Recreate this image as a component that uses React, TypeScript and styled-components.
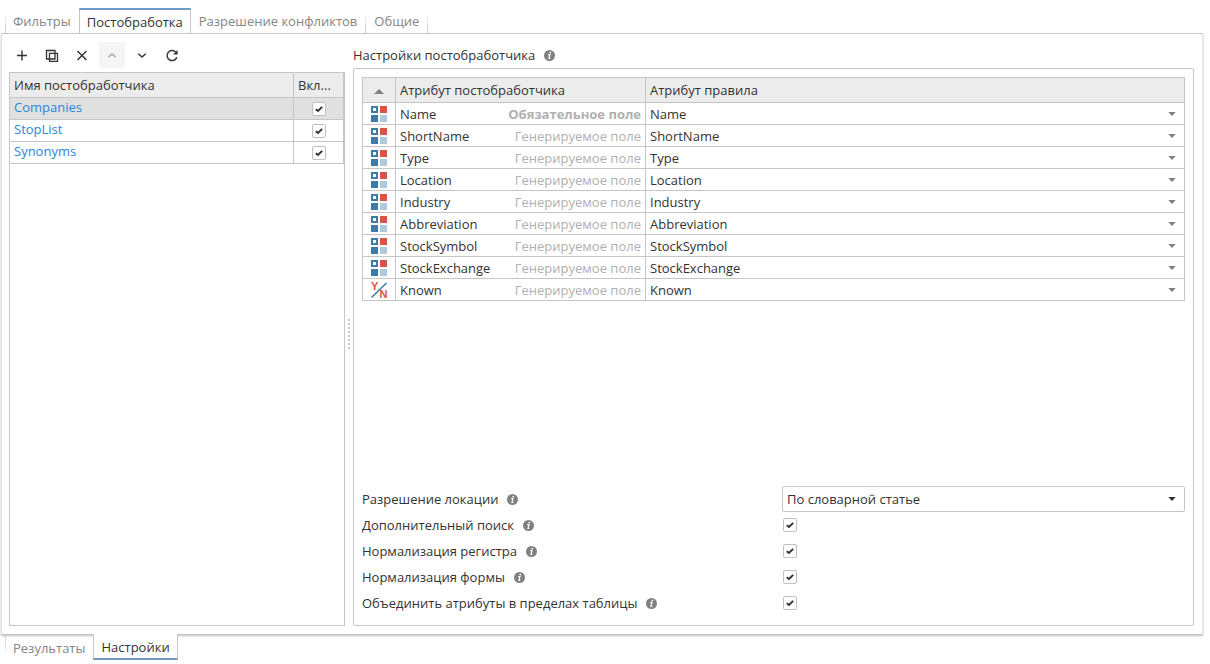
import React, { useState } from "react";
import styled, { createGlobalStyle, css } from "styled-components";

const line = "#c5c5c5";
const accent = "#6d9ac8";

const GlobalStyle = createGlobalStyle`
  *, *::before, *::after { box-sizing: border-box; }
  body {
    margin: 0;
    background: #fff;
    color: #333;
    font: 13px/20px "Open Sans", sans-serif;
  }
  button, input, select { font: inherit; color: inherit; }
`;

const Page = styled.div`
  display: flex;
  flex-direction: column;
  min-height: 100vh;
  padding: 8px 7px 4px 1px;
`;

const Tabs = styled.nav<{ $side: "top" | "bottom" }>`
  display: flex;
  position: relative;
  height: 26px;
  padding-left: 4px;
  ${(p) => (p.$side === "top" ? "margin-bottom: -1px;" : "margin-top: -1px;")}
`;

const Tab = styled.button<{ $side: "top" | "bottom"; $active?: boolean }>`
  padding: ${(p) => (p.$side === "top" ? "0 8px" : "1px 8px 0")};
  border: 0;
  background: none;
  color: #858585;
  white-space: nowrap;
  border-style: solid;
  border-width: 0 1px 0 0;
  border-image: linear-gradient(
      ${(p) => (p.$side === "top" ? "to bottom" : "to top")},
      transparent 20%,
      ${line}
    )
    1;
  &:first-child { border-left-width: 1px; padding-left: 7px; }
  ${(p) =>
    p.$active &&
    css`
      padding: ${p.$side === "top" ? "0 7px" : "2px 7px 0"};
      background: #fff;
      color: #333;
      border-image: none;
      border-color: ${line};
      border-width: 0 1px;
      ${p.$side === "top"
        ? `border-top: 2px solid ${accent};`
        : `border-bottom: 2px solid ${accent};`}
      margin-left: -1px;
    `}
`;

const Frame = styled.main`
  flex: 1;
  display: flex;
  padding: 8px;
  border-top: 1px solid ${line};
  border-bottom: 1px solid ${line};
  border-left: 1px solid #e4e4e4;
  border-right: 1px solid #e4e4e4;
  box-shadow: 0 1px 2px rgba(0, 0, 0, 0.25);
  clip-path: inset(0 -3px -3px -1px);
`;

const Side = styled.section`
  display: flex;
  flex-direction: column;
  flex: 0 0 336px;
  margin-left: -1px;
`;

const Toolbar = styled.div`
  display: flex;
  gap: 4px;
  margin-bottom: 4px;
`;

const ToolButton = styled.button`
  display: grid;
  place-items: center;
  width: 26px;
  height: 26px;
  padding: 0;
  border: 0;
  border-radius: 2px;
  background: none;
  color: #333;
  &:disabled { background: #f5f5f5; color: #a5a5a5; }
`;

const ListPanel = styled.div`
  flex: 1;
  border: 1px solid ${line};
`;

const Grid = styled.table`
  width: 100%;
  table-layout: fixed;
  border-collapse: separate;
  border-spacing: 0;
`;

const FieldGrid = styled(Grid)`
  border-top: 1px solid ${line};
  border-left: 1px solid ${line};
`;

const Head = styled.th`
  height: 25px;
  padding: 0 4px;
  border-right: 1px solid ${line};
  border-bottom: 1px solid ${line};
  background: #ececec;
  font-weight: 400;
  text-align: left;
  white-space: nowrap;
  svg { display: block; margin-top: 2px; }
`;

const Cell = styled.td<{ $center?: boolean }>`
  height: 22px;
  padding: ${(p) => (p.$center ? "0" : "0 4px")};
  border-right: 1px solid ${line};
  border-bottom: 1px solid ${line};
  line-height: 20px;
  text-align: ${(p) => (p.$center ? "center" : "left")};
`;

const Row = styled.tr<{ $selected?: boolean }>`
  background: ${(p) => (p.$selected ? "#e0e0e0" : "#fff")};
`;

const CellIcon = styled.span`
  display: flex;
  justify-content: center;
`;

const NameLink = styled.a`
  display: block;
  height: 21px;
  line-height: 18px;
  color: #2b86dc;
  text-decoration: none;
`;

const CheckBox = styled.span`
  display: grid;
  > * { grid-area: 1 / 1; place-self: center; }
  svg { pointer-events: none; visibility: hidden; }
  input:checked + svg { visibility: visible; }
`;

const CheckInput = styled.input`
  appearance: none;
  width: 14px;
  height: 14px;
  margin: 0;
  border: 1px solid #c0c0c0;
  border-radius: 2px;
  background: #fff;
`;

const Splitter = styled.div`
  display: grid;
  place-items: center;
  flex: 0 0 8px;
`;

const Grip = styled.span`
  width: 2px;
  height: 30px;
  background: repeating-linear-gradient(#c5c5c5 0 2px, transparent 2px 4px);
`;

const Detail = styled.section`
  display: flex;
  flex-direction: column;
  flex: 1;
  min-width: 0;
`;

const Title = styled.h2`
  display: flex;
  align-items: center;
  gap: 9px;
  height: 26px;
  margin: 0;
  font-size: 13px;
  font-weight: 400;
`;

const DetailPanel = styled.div`
  display: flex;
  flex-direction: column;
  justify-content: space-between;
  flex: 1;
  gap: 16px;
  padding: 8px;
  border: 1px solid ${line};
  border-radius: 2px;
`;

const AttributeName = styled.div`
  display: flex;
  justify-content: space-between;
`;

const Hint = styled.span<{ $required?: boolean }>`
  color: #b0b0b0;
  font-weight: ${(p) => (p.$required ? 700 : 400)};
`;

const SelectWrap = styled.div<{ $boxed?: boolean }>`
  position: relative;
  height: ${(p) => (p.$boxed ? 26 : 20)}px;
  border: ${(p) => (p.$boxed ? `1px solid ${line}` : "0")};
  border-radius: 2px;
  color: ${(p) => (p.$boxed ? "#333" : "#808080")};
  svg {
    position: absolute;
    top: 0;
    bottom: 0;
    right: ${(p) => (p.$boxed ? 8 : 4)}px;
    margin: auto 0;
    pointer-events: none;
  }
`;

const Select = styled.select<{ $boxed?: boolean }>`
  display: block;
  appearance: none;
  width: 100%;
  height: 100%;
  padding: 0 20px 0 ${(p) => (p.$boxed ? 4 : 0)}px;
  border: 0;
  background: none;
  color: #333;
`;

const Form = styled.form`
  display: grid;
  grid-template-columns: minmax(0, 420px) minmax(0, 1fr);
  grid-auto-rows: 26px;
  align-items: center;
  padding-bottom: 1px;
`;

const Label = styled.label`
  display: flex;
  align-items: center;
  gap: 9px;
  white-space: nowrap;
`;

const Value = styled.div`
  display: flex;
  padding-left: 1px;
`;

const Info = () => (
  <svg width="11" height="11" viewBox="0 0 11 11" aria-hidden="true">
    <circle cx="5.5" cy="5.5" r="5.5" fill="#808080" />
    <circle cx="6.3" cy="2.6" r="0.95" fill="#fff" />
    <path d="M4.2 4.7H5.9L5 8.3H6.3" fill="none" stroke="#fff" strokeWidth="1.2" />
  </svg>
);

const Caret = () => (
  <svg width="8" height="4" viewBox="0 0 8 4" aria-hidden="true">
    <path d="M0.3 0H7.7L4 4Z" fill="currentColor" />
  </svg>
);

const StringIcon = () => (
  <svg width="16" height="16" viewBox="0 0 16 16" aria-hidden="true">
    <rect width="7" height="7" fill="#3d7ba8" />
    <rect x="2" y="2" width="3" height="3" fill="#fff" />
    <rect x="9" width="7" height="7" fill="#d95448" />
    <rect y="9" width="7" height="7" fill="#3d7ba8" />
    <rect x="9" y="9" width="7" height="7" fill="#b0c9dc" />
  </svg>
);

const BooleanIcon = () => (
  <svg width="16" height="16" viewBox="0 0 16 16" overflow="visible" aria-hidden="true">
    <g fill="#d95448" fontFamily="Liberation Sans, sans-serif" fontWeight="700" fontSize="11">
      <text x="0" y="8">Y</text>
      <text x="8.5" y="16">N</text>
    </g>
    <path d="M0.5 15.5L15.5 1" stroke="#3d7ba8" strokeWidth="1.5" />
  </svg>
);

const glyph = { width: 16, height: 16, viewBox: "0 0 16 16", fill: "none", stroke: "currentColor" };

const AddIcon = () => (
  <svg {...glyph} strokeWidth="1.4"><path d="M8 3.5v10M3 8.5h10" /></svg>
);
const CopyIcon = () => (
  <svg {...glyph} strokeWidth="1.3">
    <path d="M2.5 3.5h8.5v8.5H2.5zM5.5 6.3h8v8h-8z" />
  </svg>
);
const DeleteIcon = () => (
  <svg {...glyph} strokeWidth="1.5"><path d="M3.5 4l9 9M12.5 4l-9 9" /></svg>
);
const UpIcon = () => (
  <svg {...glyph} strokeWidth="1.5"><path d="M4.3 10.3L8 7L11.7 10.3" /></svg>
);
const DownIcon = () => (
  <svg {...glyph} strokeWidth="1.5"><path d="M4.3 6.7L8 10L11.7 6.7" /></svg>
);
const RefreshIcon = () => (
  <svg {...glyph} strokeWidth="1.5">
    <path d="M12.8 10.2A5 5 0 1 1 11.6 5" />
    <path d="M13.6 3V7.6H9Z" fill="currentColor" stroke="none" />
  </svg>
);

function Check({ id, label }: { id?: string; label?: string }) {
  return (
    <CheckBox>
      <CheckInput id={id} type="checkbox" defaultChecked aria-label={label} />
      <svg width="8" height="8" viewBox="0 0 8 8" aria-hidden="true">
        <path d="M0.8 4.2L3 6L7.2 1.9" fill="none" stroke="#333" strokeWidth="2" />
      </svg>
    </CheckBox>
  );
}

const processors = ["Companies", "StopList", "Synonyms"];
const attributes = [
  "Name", "ShortName", "Type", "Location", "Industry",
  "Abbreviation", "StockSymbol", "StockExchange", "Known",
];
const options = [
  "Дополнительный поиск",
  "Нормализация регистра",
  "Нормализация формы",
  "Объединить атрибуты в пределах таблицы",
];
const tools = [
  { label: "Добавить", icon: <AddIcon /> },
  { label: "Копировать", icon: <CopyIcon /> },
  { label: "Удалить", icon: <DeleteIcon /> },
  { label: "Вверх", icon: <UpIcon />, disabled: true },
  { label: "Вниз", icon: <DownIcon /> },
  { label: "Обновить", icon: <RefreshIcon /> },
];

function TabBar({ side, items, initial }: { side: "top" | "bottom"; items: string[]; initial: number }) {
  const [active, setActive] = useState(initial);
  return (
    <Tabs $side={side}>
      {items.map((item, i) => (
        <Tab key={item} type="button" $side={side} $active={i === active} onClick={() => setActive(i)}>
          {item}
        </Tab>
      ))}
    </Tabs>
  );
}

export default function App() {
  const [selected, setSelected] = useState(0);
  return (
    <Page>
      <GlobalStyle />
      <TabBar side="top" initial={1} items={["Фильтры", "Постобработка", "Разрешение конфликтов", "Общие"]} />
      <Frame>
        <Side>
          <Toolbar>
            {tools.map((t) => (
              <ToolButton key={t.label} type="button" aria-label={t.label} disabled={t.disabled}>
                {t.icon}
              </ToolButton>
            ))}
          </Toolbar>
          <ListPanel>
            <Grid>
              <colgroup>
                <col />
                <col width="50" />
              </colgroup>
              <thead>
                <tr>
                  <Head>Имя постобработчика</Head>
                  <Head title="Включен">Вкл...</Head>
                </tr>
              </thead>
              <tbody>
                {processors.map((name, i) => (
                  <Row key={name} $selected={i === selected} onClick={() => setSelected(i)}>
                    <Cell><NameLink href="#">{name}</NameLink></Cell>
                    <Cell $center><Check label={name} /></Cell>
                  </Row>
                ))}
              </tbody>
            </Grid>
          </ListPanel>
        </Side>
        <Splitter><Grip /></Splitter>
        <Detail>
          <Title>Настройки постобработчика <Info /></Title>
          <DetailPanel>
            <FieldGrid>
              <colgroup>
                <col width="33" />
                <col width="250" />
                <col />
              </colgroup>
              <thead>
                <tr>
                  <Head aria-label="Тип">
                    <svg width="24" height="5" viewBox="0 0 24 5" aria-hidden="true">
                      <path d="M12 0L17 5H7Z" fill="#808080" />
                    </svg>
                  </Head>
                  <Head>Атрибут постобработчика</Head>
                  <Head>Атрибут правила</Head>
                </tr>
              </thead>
              <tbody>
                {attributes.map((name) => (
                  <Row key={name}>
                    <Cell $center>
                      <CellIcon>{name === "Known" ? <BooleanIcon /> : <StringIcon />}</CellIcon>
                    </Cell>
                    <Cell>
                      <AttributeName>
                        {name}
                        <Hint $required={name === "Name"}>
                          {name === "Name" ? "Обязательное поле" : "Генерируемое поле"}
                        </Hint>
                      </AttributeName>
                    </Cell>
                    <Cell>
                      <SelectWrap>
                        <Select aria-label={`Атрибут правила ${name}`} defaultValue={name}>
                          {attributes.map((a) => <option key={a}>{a}</option>)}
                        </Select>
                        <Caret />
                      </SelectWrap>
                    </Cell>
                  </Row>
                ))}
              </tbody>
            </FieldGrid>
            <Form>
              <Label htmlFor="location">Разрешение локации <Info /></Label>
              <SelectWrap $boxed>
                <Select id="location" $boxed>
                  <option>По словарной статье</option>
                </Select>
                <Caret />
              </SelectWrap>
              {options.map((o, i) => (
                <React.Fragment key={o}>
                  <Label htmlFor={`option-${i}`}>{o} <Info /></Label>
                  <Value><Check id={`option-${i}`} /></Value>
                </React.Fragment>
              ))}
            </Form>
          </DetailPanel>
        </Detail>
      </Frame>
      <TabBar side="bottom" initial={1} items={["Результаты", "Настройки"]} />
    </Page>
  );
}
